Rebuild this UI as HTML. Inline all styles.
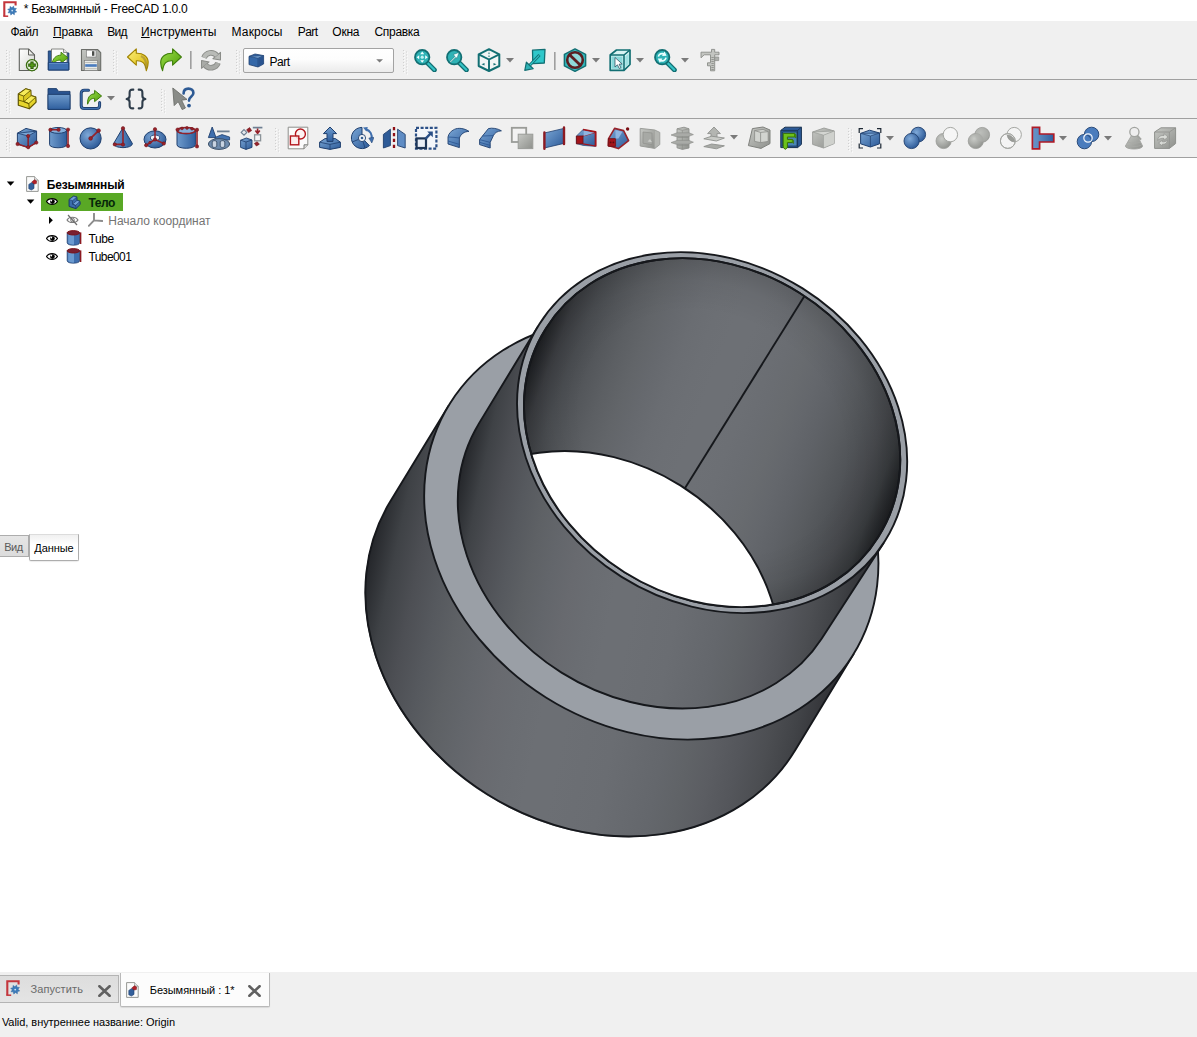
<!DOCTYPE html>
<html><head><meta charset="utf-8"><title>FreeCAD</title>
<style>
html,body{margin:0;padding:0;}
body{width:1197px;height:1037px;overflow:hidden;background:#fff;font-family:"Liberation Sans",sans-serif;font-size:12px;color:#000;position:relative;}
.abs{position:absolute;}
#title{left:0;top:0;width:1197px;height:21px;background:#fff;}
#title span{position:absolute;left:23px;top:2px;font-size:12px;white-space:nowrap;}
#menubar{left:0;top:21px;width:1197px;height:22px;background:#f0f0f0;}
#menubar span{position:absolute;top:4px;font-size:12px;white-space:nowrap;}
.tb{left:0;width:1197px;background:#f0f0f0;}
.sep{left:0;width:1197px;height:1px;background:#a0a0a0;}
#view{left:0;top:158px;width:1197px;height:814px;background:#fff;}
.tree{position:absolute;font-size:12px;white-space:nowrap;}
#bottom{left:0;top:972px;width:1197px;height:65px;background:#f0f0f0;}
#status{left:2px;top:1016px;font-size:11.5px;white-space:nowrap;}
</style></head><body>
<div id="title" class="abs"></div>
<div id="menubar" class="abs"></div>
<div class="abs tb" style="top:43px;height:36px"></div>
<div class="abs sep" style="top:79px"></div>
<div class="abs tb" style="top:80px;height:38px"></div>
<div class="abs sep" style="top:118px"></div>
<div class="abs tb" style="top:119px;height:38px"></div>
<div class="abs sep" style="top:157px"></div>
<div id="view" class="abs"></div>
<div id="bottom" class="abs"></div>
<!-- tree selection highlight -->
<div class="abs" style="left:41px;top:193px;width:82px;height:17.5px;background:#59a825"></div>
<!-- expand arrows -->
<svg class="abs" style="left:6px;top:180px" width="10" height="8" viewBox="0 0 10 8"><path d="M0.8,1.6 H8.4 L4.6,5.8 Z" fill="#000"/></svg>
<svg class="abs" style="left:26px;top:198px" width="10" height="8" viewBox="0 0 10 8"><path d="M0.8,1.6 H8.4 L4.6,5.8 Z" fill="#000"/></svg>
<svg class="abs" style="left:48px;top:216px" width="6" height="9" viewBox="0 0 6 9"><path d="M1,0.6 V8 L4.8,4.3 Z" fill="#000"/></svg>
<!-- document icon -->
<svg class="abs" style="left:26px;top:176px" width="13" height="16" viewBox="0 0 13 16"><path d="M0.6,0.6 H8.6 L12.2,4.2 V15.4 H0.6 Z" fill="#fbfbfb" stroke="#8a8c88" stroke-width="0.9"/><path d="M8.6,0.6 V4.2 H12.2" fill="#e4e4e4" stroke="#8a8c88" stroke-width="0.7"/><path d="M2.8,8.4 L5.6,6.6 L8,7.6 V12.4 L5.4,14 L2.8,12.8 Z" fill="#34609c" stroke="#1f3f6e" stroke-width="0.6"/><path d="M5.8,6 L8.4,3.8 L10.6,5 L10.4,7.6 L8,8 Z" fill="#b02028" stroke="#7a0d12" stroke-width="0.5"/></svg>
<!-- eye icons -->
<svg class="abs" style="left:46px;top:197px" width="12" height="9" viewBox="0 0 12 9"><path d="M0.5,4.6 C2.6,0.6 9.4,0.6 11.5,4.6 C9.4,8.4 2.6,8.4 0.5,4.6 Z" fill="#fff" stroke="#000" stroke-width="1.1"/><circle cx="6.4" cy="4.6" r="2.4" fill="#000"/><circle cx="5.3" cy="3.6" r="0.9" fill="#fff"/></svg>
<svg class="abs" style="left:46px;top:233.6px" width="12" height="9" viewBox="0 0 12 9"><path d="M0.5,4.6 C2.6,0.6 9.4,0.6 11.5,4.6 C9.4,8.4 2.6,8.4 0.5,4.6 Z" fill="#fff" stroke="#000" stroke-width="1.1"/><circle cx="6.4" cy="4.6" r="2.4" fill="#000"/><circle cx="5.3" cy="3.6" r="0.9" fill="#fff"/></svg>
<svg class="abs" style="left:46px;top:251.8px" width="12" height="9" viewBox="0 0 12 9"><path d="M0.5,4.6 C2.6,0.6 9.4,0.6 11.5,4.6 C9.4,8.4 2.6,8.4 0.5,4.6 Z" fill="#fff" stroke="#000" stroke-width="1.1"/><circle cx="6.4" cy="4.6" r="2.4" fill="#000"/><circle cx="5.3" cy="3.6" r="0.9" fill="#fff"/></svg>
<!-- hidden eye -->
<svg class="abs" style="left:66px;top:214px" width="13" height="12" viewBox="0 0 13 12"><path d="M1,6 C3,2.4 10,2.4 12,6 C10,9.4 3,9.4 1,6 Z" fill="none" stroke="#7c7c7c" stroke-width="1.1"/><circle cx="6.5" cy="6" r="1.8" fill="none" stroke="#7c7c7c" stroke-width="1"/><path d="M2,1 L11,11" stroke="#6e6e6e" stroke-width="1.2"/></svg>
<!-- body icon -->
<svg class="abs" style="left:67px;top:194.5px" width="15" height="15" viewBox="0 0 24 24"><path d="M3.3,7.1 L10.8,1.8 L15.8,3.3 L16.1,8.6 L20.8,10.1 L21.1,15.1 L14.3,21.8 L3.3,18.3 Z" fill="#3a6bab" stroke="#1a3a66" stroke-width="1.6" stroke-linejoin="round"/><path d="M3.3,7.1 L10.8,1.8 L15.8,3.3 L8.8,9.1 Z" fill="#6f9fd6" stroke="#1a3a66" stroke-width="1"/><path d="M8.8,14.6 L16.1,8.6 L20.8,10.1 L13.8,16.6 Z" fill="#6f9fd6" stroke="#1a3a66" stroke-width="1"/><path d="M8.8,9.1 V14.6 L13.8,16.6 L14.3,21.8" fill="none" stroke="#1a3a66" stroke-width="1"/></svg>
<!-- origin axis icon -->
<svg class="abs" style="left:88px;top:213px" width="15" height="14" viewBox="0 0 15 14"><path d="M6,0.6 V7.4 L0.8,12.8 M6,7.4 L14.4,8" fill="none" stroke="#8c8c8c" stroke-width="1.9" stroke-linecap="round"/></svg>
<!-- tube icons -->
<svg class="abs" style="left:66px;top:230px" width="16" height="16" viewBox="0 0 16 16"><path d="M1.2,2.8 V12.8 C1.2,16 13.6,16 13.6,12.8 V2.8 Z" fill="#3f6fae" stroke="#1f3f6e" stroke-width="0.8"/><path d="M2.2,4 V13 C4,14.6 7,14.8 8,14.6 V5 Z" fill="#6b9ad0"/><ellipse cx="7.4" cy="2.8" rx="6.2" ry="2.2" fill="#7a2030" stroke="#7a0d12" stroke-width="0.9"/><path d="M14.6,2.4 V14" stroke="#8c1a22" stroke-width="1.5"/></svg>
<svg class="abs" style="left:66px;top:248px" width="16" height="16" viewBox="0 0 16 16"><path d="M1.2,2.8 V12.8 C1.2,16 13.6,16 13.6,12.8 V2.8 Z" fill="#3f6fae" stroke="#1f3f6e" stroke-width="0.8"/><path d="M2.2,4 V13 C4,14.6 7,14.8 8,14.6 V5 Z" fill="#6b9ad0"/><ellipse cx="7.4" cy="2.8" rx="6.2" ry="2.2" fill="#7a2030" stroke="#7a0d12" stroke-width="0.9"/><path d="M14.6,2.4 V14" stroke="#8c1a22" stroke-width="1.5"/></svg>

<!-- title icon -->
<svg class="abs" style="left:3.2px;top:1px" width="14" height="16" viewBox="0 0 14 16"><path d="M1.3,15.2 V1.3 H12.6 V4.4" fill="none" stroke="#c4363c" stroke-width="2.1"/><path d="M0.3,15.2 H5.2" stroke="#c4363c" stroke-width="1.5"/><path d="M13.69,10.99 L11.43,11.45 L11.39,13.76 L9.47,12.49 L7.81,14.09 L7.35,11.83 L5.04,11.79 L6.31,9.87 L4.71,8.21 L6.97,7.75 L7.01,5.44 L8.93,6.71 L10.59,5.11 L11.05,7.37 L13.36,7.41 L12.09,9.33 Z" fill="#3d7bb8" stroke="#2c66a4" stroke-width="0.5"/><circle cx="9.2" cy="9.6" r="0.9" fill="#cfe3f5"/></svg>
<!-- workbench combo -->
<div class="abs" style="left:243px;top:48px;width:149px;height:23px;border:1px solid #a3a3a3;border-radius:2px;background:linear-gradient(#ffffff,#fdfdfd 45%,#ebebeb)"></div>
<svg class="abs" style="left:247.5px;top:52.5px" width="17" height="15" viewBox="0 0 17 15"><path d="M1,3.4 L7,1 L15.6,2.6 V11 L10,14 L1,11.6 Z" fill="#3568a8" stroke="#1f3f6e" stroke-width="0.8" stroke-linejoin="round"/><path d="M1,3.4 L10,5.2 L15.6,2.6 Z" fill="#7aa6d6" stroke="#1f3f6e" stroke-width="0.6"/><path d="M10,5.2 V14" stroke="#1f3f6e" stroke-width="0.6"/><path d="M10.4,5.6 L15.2,3.4 V10.8 L10.4,13.4 Z" fill="#2a5490"/></svg>
<svg class="abs" style="left:376px;top:58.6px" width="8" height="5" viewBox="0 0 8 5"><path d="M0.2,0.2 H7 L3.6,3.6 Z" fill="#7a7a7a"/></svg>
<!-- property tabs -->
<div class="abs" style="left:0;top:535px;width:28.5px;height:22px;border:1px solid #adadad;border-left:none;background:linear-gradient(#e6e6e6,#dcdcdc);box-sizing:border-box"></div>
<div class="abs" style="left:29px;top:534px;width:50px;height:26.5px;border:1px solid #adadad;border-top:1px solid #dcdcdc;border-radius:0 0 2px 2px;background:linear-gradient(#f0f0f0,#ffffff 40%);box-sizing:border-box;box-shadow:0 1px 1px rgba(0,0,0,0.08)"></div>
<!-- bottom document tabs -->
<div class="abs" style="left:0;top:975px;width:119px;height:28px;border:1px solid #b4b4b4;border-left:none;background:linear-gradient(#dddddd,#e4e4e4);box-sizing:border-box"></div>
<div class="abs" style="left:119.5px;top:973px;width:150px;height:33.6px;border:1px solid #b9b9b9;border-top:none;border-radius:0 0 2px 2px;background:#fcfcfc;box-sizing:border-box;box-shadow:0 1px 1px rgba(0,0,0,0.10)"></div>
<svg class="abs" style="left:6px;top:979.6px" width="14" height="16" viewBox="0 0 14 16"><path d="M1.3,15.2 V1.3 H12.6 V4.4" fill="none" stroke="#c4363c" stroke-width="2.1"/><path d="M0.3,15.2 H5.2" stroke="#c4363c" stroke-width="1.5"/><path d="M13.69,10.99 L11.43,11.45 L11.39,13.76 L9.47,12.49 L7.81,14.09 L7.35,11.83 L5.04,11.79 L6.31,9.87 L4.71,8.21 L6.97,7.75 L7.01,5.44 L8.93,6.71 L10.59,5.11 L11.05,7.37 L13.36,7.41 L12.09,9.33 Z" fill="#3d7bb8" stroke="#2c66a4" stroke-width="0.5"/><circle cx="9.2" cy="9.6" r="0.9" fill="#cfe3f5"/></svg>
<svg class="abs" style="left:97.5px;top:985px" width="13" height="12" viewBox="0 0 13 12"><path d="M1.4,1.2 L11.6,10.8 M11.6,1.2 L1.4,10.8" stroke="#606060" stroke-width="2.6" stroke-linecap="round"/></svg>
<svg class="abs" style="left:248px;top:985px" width="13" height="12" viewBox="0 0 13 12"><path d="M1.4,1.2 L11.6,10.8 M11.6,1.2 L1.4,10.8" stroke="#606060" stroke-width="2.6" stroke-linecap="round"/></svg>
<svg class="abs" style="left:126px;top:981.5px" width="13" height="16" viewBox="0 0 13 16"><path d="M0.6,0.6 H8.6 L12.2,4.2 V15.4 H0.6 Z" fill="#fbfbfb" stroke="#8a8c88" stroke-width="0.9"/><path d="M8.6,0.6 V4.2 H12.2" fill="#e4e4e4" stroke="#8a8c88" stroke-width="0.7"/><path d="M2.8,8.4 L5.6,6.6 L8,7.6 V12.4 L5.4,14 L2.8,12.8 Z" fill="#34609c" stroke="#1f3f6e" stroke-width="0.6"/><path d="M5.8,6 L8.4,3.8 L10.6,5 L10.4,7.6 L8,8 Z" fill="#b02028" stroke="#7a0d12" stroke-width="0.5"/></svg>


<svg class="abs" style="left:0;top:0" width="1197" height="1037" viewBox="0 0 1197 1037">
<defs>
<linearGradient id="gL" gradientUnits="userSpaceOnUse" x1="364.32" y1="577.69" x2="857.23" y2="682.46"><stop offset="0.000" stop-color="#24262a"/><stop offset="0.050" stop-color="#3f4246"/><stop offset="0.100" stop-color="#4d4f54"/><stop offset="0.150" stop-color="#56595e"/><stop offset="0.200" stop-color="#5e6165"/><stop offset="0.250" stop-color="#63666b"/><stop offset="0.300" stop-color="#686a6f"/><stop offset="0.350" stop-color="#6a6d72"/><stop offset="0.400" stop-color="#6c6f74"/><stop offset="0.450" stop-color="#6c6f74"/><stop offset="0.500" stop-color="#6b6e73"/><stop offset="0.550" stop-color="#6a6d72"/><stop offset="0.600" stop-color="#676a6f"/><stop offset="0.650" stop-color="#64676c"/><stop offset="0.700" stop-color="#606367"/><stop offset="0.750" stop-color="#5b5d62"/><stop offset="0.800" stop-color="#54565b"/><stop offset="0.850" stop-color="#4c4e52"/><stop offset="0.900" stop-color="#414347"/><stop offset="0.950" stop-color="#333438"/><stop offset="1.000" stop-color="#16171a"/></linearGradient>
<linearGradient id="gS" gradientUnits="userSpaceOnUse" x1="456.93" y1="488.19" x2="885.71" y2="579.33"><stop offset="0.000" stop-color="#24262a"/><stop offset="0.050" stop-color="#3f4246"/><stop offset="0.100" stop-color="#4d4f54"/><stop offset="0.150" stop-color="#56595e"/><stop offset="0.200" stop-color="#5e6165"/><stop offset="0.250" stop-color="#63666b"/><stop offset="0.300" stop-color="#686a6f"/><stop offset="0.350" stop-color="#6a6d72"/><stop offset="0.400" stop-color="#6c6f74"/><stop offset="0.450" stop-color="#6c6f74"/><stop offset="0.500" stop-color="#6b6e73"/><stop offset="0.550" stop-color="#6a6d72"/><stop offset="0.600" stop-color="#676a6f"/><stop offset="0.650" stop-color="#64676c"/><stop offset="0.700" stop-color="#606367"/><stop offset="0.750" stop-color="#5b5d62"/><stop offset="0.800" stop-color="#54565b"/><stop offset="0.850" stop-color="#4c4e52"/><stop offset="0.900" stop-color="#414347"/><stop offset="0.950" stop-color="#333438"/><stop offset="1.000" stop-color="#16171a"/></linearGradient>
<linearGradient id="gI" gradientUnits="userSpaceOnUse" x1="530.01" y1="362.75" x2="894.19" y2="502.55"><stop offset="0.000" stop-color="#1e2023"/><stop offset="0.050" stop-color="#3c3e42"/><stop offset="0.100" stop-color="#4a4d51"/><stop offset="0.150" stop-color="#54575b"/><stop offset="0.200" stop-color="#5c5f63"/><stop offset="0.250" stop-color="#626569"/><stop offset="0.300" stop-color="#66696e"/><stop offset="0.350" stop-color="#6a6d72"/><stop offset="0.400" stop-color="#6c6f74"/><stop offset="0.450" stop-color="#6d7075"/><stop offset="0.500" stop-color="#6d7075"/><stop offset="0.550" stop-color="#6c6f74"/><stop offset="0.600" stop-color="#6a6d72"/><stop offset="0.650" stop-color="#686b6f"/><stop offset="0.700" stop-color="#64676c"/><stop offset="0.750" stop-color="#5f6267"/><stop offset="0.800" stop-color="#595c60"/><stop offset="0.850" stop-color="#515458"/><stop offset="0.900" stop-color="#484a4e"/><stop offset="0.950" stop-color="#3a3d40"/><stop offset="1.000" stop-color="#1e2023"/></linearGradient>
<clipPath id="cpIn"><path d="M545.94,328.42 A196.15 163.74 32.1 1 0 878.26,536.88 A196.15 163.74 32.1 1 0 545.94,328.42 Z" /></clipPath>
<radialGradient id="gIr" gradientUnits="userSpaceOnUse" cx="0" cy="0" r="196.15" gradientTransform="translate(712.1 432.65) rotate(32.1) scale(1 0.8348)"><stop offset="0" stop-color="#000" stop-opacity="0"/><stop offset="0.70" stop-color="#000" stop-opacity="0"/><stop offset="0.88" stop-color="#000" stop-opacity="0.05"/><stop offset="1" stop-color="#000" stop-opacity="0.14"/></radialGradient>
</defs>
<path d="M450.09,403.28 A237.52 198.28 32.1 1 0 852.51,655.72 A237.52 198.28 32.1 1 0 450.09,403.28 Z" fill="url(#gL)"/>
<path d="M391.26,499.93 A237.62 198.37 32.1 1 0 793.84,752.47 A237.62 198.37 32.1 1 0 391.26,499.93 Z" fill="url(#gL)"/>
<path d="M448.93,405.17 L390.09,501.82 L795.16,750.33 L853.83,653.57 Z" fill="url(#gL)"/>
<path d="M448.93,405.17 L390.09,501.82 A237.62 198.37 32.1 0 0 487.14,794.24 A237.62 198.37 32.1 0 0 795.16,750.33 L853.83,653.57" fill="none" stroke="#16181c" stroke-width="1.9" stroke-linejoin="round"/>
<path d="M450.09,403.28 A237.52 198.28 32.1 1 0 852.51,655.72 A237.52 198.28 32.1 1 0 450.09,403.28 Z" fill="#9a9fa6" stroke="#16181c" stroke-width="1.9" stroke-linejoin="round"/>
<path d="M539.29,324.24 A204.00 170.30 32.1 1 0 884.91,541.06 A204.00 170.30 32.1 1 0 539.29,324.24 Z" fill="url(#gS)"/>
<path d="M479.87,421.96 A202.37 168.94 32.1 1 0 822.73,637.04 A202.37 168.94 32.1 1 0 479.87,421.96 Z" fill="url(#gS)"/>
<path d="M538.25,325.93 L478.84,423.63 L821.62,638.78 L883.80,542.81 Z" fill="url(#gS)"/>
<path d="M538.25,325.93 L478.84,423.63 A202.37 168.94 32.1 0 0 561.53,672.61 A202.37 168.94 32.1 0 0 821.62,638.78 L883.80,542.81" fill="none" stroke="#16181c" stroke-width="1.9" stroke-linejoin="round"/>
<path d="M539.29,324.24 A204.00 170.30 32.1 1 0 884.91,541.06 A204.00 170.30 32.1 1 0 539.29,324.24 Z" fill="#9a9fa6" stroke="#16181c" stroke-width="1.9" stroke-linejoin="round"/>
<path d="M545.94,328.42 A196.15 163.74 32.1 1 0 878.26,536.88 A196.15 163.74 32.1 1 0 545.94,328.42 Z" fill="url(#gI)" stroke="#16181c" stroke-width="1.9" stroke-linejoin="round"/>
<path d="M545.94,328.42 A196.15 163.74 32.1 1 0 878.26,536.88 A196.15 163.74 32.1 1 0 545.94,328.42 Z" fill="url(#gIr)"/>
<g clip-path="url(#cpIn)"><path d="M430.48,519.47 A193.51 161.55 32.1 1 0 758.34,725.13 A193.51 161.55 32.1 1 0 430.48,519.47 Z" fill="#ffffff" stroke="#16181c" stroke-width="1.9" stroke-linejoin="round"/>
<line x1="804.2" y1="296.4" x2="685.1" y2="488.1" stroke="#16181c" stroke-width="1.9"/>
</g>
<path d="M545.94,328.42 A196.15 163.74 32.1 1 0 878.26,536.88 A196.15 163.74 32.1 1 0 545.94,328.42 Z" fill="none" stroke="#16181c" stroke-width="1.9" stroke-linejoin="round"/>
</svg>
<svg width="0" height="0" style="position:absolute"><defs>
<linearGradient id="bl" x1="0" y1="0" x2="1" y2="1"><stop offset="0" stop-color="#7ba7d6"/><stop offset="1" stop-color="#2c5a98"/></linearGradient>
<linearGradient id="blv" x1="0" y1="0" x2="0" y2="1"><stop offset="0" stop-color="#6f9bcc"/><stop offset="1" stop-color="#2f5f9e"/></linearGradient>
<linearGradient id="blh" x1="0" y1="0" x2="1" y2="0"><stop offset="0" stop-color="#6f9bcc"/><stop offset="1" stop-color="#2f5f9e"/></linearGradient>
<linearGradient id="gr" x1="0" y1="0" x2="1" y2="1"><stop offset="0" stop-color="#c6c8c4"/><stop offset="1" stop-color="#8e908c"/></linearGradient>
<linearGradient id="grv" x1="0" y1="0" x2="0" y2="1"><stop offset="0" stop-color="#d0d2ce"/><stop offset="1" stop-color="#8c8e8a"/></linearGradient>
<linearGradient id="yl" x1="0" y1="0" x2="1" y2="1"><stop offset="0" stop-color="#fdf07a"/><stop offset="1" stop-color="#d8b400"/></linearGradient>
<linearGradient id="gn" x1="0" y1="0" x2="1" y2="1"><stop offset="0" stop-color="#9be04a"/><stop offset="1" stop-color="#4e9a06"/></linearGradient>
<linearGradient id="pap" x1="0" y1="0" x2="1" y2="1"><stop offset="0" stop-color="#ffffff"/><stop offset="1" stop-color="#d4d6d2"/></linearGradient>
<radialGradient id="sph" cx="0.38" cy="0.35" r="0.7"><stop offset="0" stop-color="#7fa9d8"/><stop offset="1" stop-color="#2a5795"/></radialGradient>
<radialGradient id="sphg" cx="0.38" cy="0.35" r="0.7"><stop offset="0" stop-color="#c9cbc7"/><stop offset="1" stop-color="#8f918d"/></radialGradient>
<linearGradient id="tl" x1="0" y1="0" x2="1" y2="1"><stop offset="0" stop-color="#43d3d5"/><stop offset="1" stop-color="#1fa3a6"/></linearGradient>
</defs></svg>
<svg class="abs" style="left:6px;top:50px" width="6" height="25" viewBox="0 0 6 25"><rect x="0" y="0" width="1" height="1" fill="#d0d0d0"/><rect x="1" y="1" width="1" height="1" fill="#fbfbfb"/><rect x="3" y="1.5" width="1" height="1" fill="#d0d0d0"/><rect x="4" y="2.5" width="1" height="1" fill="#ffffff"/><rect x="0" y="3" width="1" height="1" fill="#d0d0d0"/><rect x="1" y="4" width="1" height="1" fill="#fbfbfb"/><rect x="3" y="4.5" width="1" height="1" fill="#d0d0d0"/><rect x="4" y="5.5" width="1" height="1" fill="#ffffff"/><rect x="0" y="6" width="1" height="1" fill="#d0d0d0"/><rect x="1" y="7" width="1" height="1" fill="#fbfbfb"/><rect x="3" y="7.5" width="1" height="1" fill="#d0d0d0"/><rect x="4" y="8.5" width="1" height="1" fill="#ffffff"/><rect x="0" y="9" width="1" height="1" fill="#d0d0d0"/><rect x="1" y="10" width="1" height="1" fill="#fbfbfb"/><rect x="3" y="10.5" width="1" height="1" fill="#d0d0d0"/><rect x="4" y="11.5" width="1" height="1" fill="#ffffff"/><rect x="0" y="12" width="1" height="1" fill="#d0d0d0"/><rect x="1" y="13" width="1" height="1" fill="#fbfbfb"/><rect x="3" y="13.5" width="1" height="1" fill="#d0d0d0"/><rect x="4" y="14.5" width="1" height="1" fill="#ffffff"/><rect x="0" y="15" width="1" height="1" fill="#d0d0d0"/><rect x="1" y="16" width="1" height="1" fill="#fbfbfb"/><rect x="3" y="16.5" width="1" height="1" fill="#d0d0d0"/><rect x="4" y="17.5" width="1" height="1" fill="#ffffff"/><rect x="0" y="18" width="1" height="1" fill="#d0d0d0"/><rect x="1" y="19" width="1" height="1" fill="#fbfbfb"/><rect x="3" y="19.5" width="1" height="1" fill="#d0d0d0"/><rect x="4" y="20.5" width="1" height="1" fill="#ffffff"/><rect x="0" y="21" width="1" height="1" fill="#d0d0d0"/><rect x="1" y="22" width="1" height="1" fill="#fbfbfb"/><rect x="3" y="22.5" width="1" height="1" fill="#d0d0d0"/><rect x="4" y="23.5" width="1" height="1" fill="#ffffff"/></svg>
<svg class="abs" style="left:16px;top:48px" width="24" height="24" viewBox="0 0 24 24"><path d="M3.3,1 h9.2 l6,6 v15.5 h-15.2 z" fill="url(#pap)" stroke="#5f615d" stroke-width="1.1" stroke-linejoin="round"/>
<path d="M12.5,1 v6 h6 z" fill="#e9eae8" stroke="#5f615d" stroke-width="1" stroke-linejoin="round"/>
<circle cx="16" cy="17.2" r="5.6" fill="#e4f0d8" stroke="#3a6e10" stroke-width="1.3"/>
<path d="M16,13.4 v7.6 M12.2,17.2 h7.6" stroke="#2b5a0a" stroke-width="3.2"/>
<path d="M16,14.4 v5.6 M13.2,17.2 h5.6" stroke="#5aa51a" stroke-width="1.2"/></svg>
<svg class="abs" style="left:47px;top:48px" width="24" height="24" viewBox="0 0 24 24"><path d="M1.3,3 h6 l1.5,2 h13 v17 h-20.5 z" fill="#2f5c99" stroke="#1d3f70" stroke-width="1"/>
<path d="M4.5,1 h12 l3.5,3.5 v10 h-15.5 z" fill="#fbfbfb" stroke="#6a6c68" stroke-width="0.8"/>
<path d="M16.5,1 v3.5 h3.5" fill="#ddd" stroke="#6a6c68" stroke-width="0.7"/>
<path d="M5,16.5 c0.5,-6 4,-9.5 9,-9.3 v-3 l7,5.6 l-7,5.4 v-3 c-3,-0.4 -6,0.8 -9,4.3 z" fill="url(#gn)" stroke="#3c7a08" stroke-width="0.9" stroke-linejoin="round"/>
<path d="M1.3,14.5 h20.5 v7.5 h-20.5 z" fill="#3f70b2" stroke="#1d3f70" stroke-width="1"/>
<path d="M2,15.3 h19" stroke="#6f9bd2" stroke-width="0.8"/></svg>
<svg class="abs" style="left:79px;top:48px" width="24" height="24" viewBox="0 0 24 24"><path d="M2.5,1.5 h16 l3.2,3.2 v17.8 h-19.2 z" fill="url(#gr)" stroke="#6b6d69" stroke-width="1.1" stroke-linejoin="round"/>
<rect x="7.5" y="2.2" width="9.5" height="6.8" fill="#fafafa" stroke="#777" stroke-width="0.6"/>
<rect x="13" y="3.2" width="2.4" height="4.6" fill="#4a4c49"/>
<rect x="5.5" y="12.5" width="13" height="10" fill="#e9ebe8" stroke="#777" stroke-width="0.6"/>
<rect x="6.2" y="16.2" width="11.6" height="2.6" fill="#4a7cbf"/>
<path d="M6.2,14.5 h11.6 M6.2,20.7 h11.6" stroke="#b5b7b3" stroke-width="0.9"/></svg>
<svg class="abs" style="left:113px;top:50px" width="6" height="25" viewBox="0 0 6 25"><rect x="0" y="0" width="1" height="1" fill="#d0d0d0"/><rect x="1" y="1" width="1" height="1" fill="#fbfbfb"/><rect x="3" y="1.5" width="1" height="1" fill="#d0d0d0"/><rect x="4" y="2.5" width="1" height="1" fill="#ffffff"/><rect x="0" y="3" width="1" height="1" fill="#d0d0d0"/><rect x="1" y="4" width="1" height="1" fill="#fbfbfb"/><rect x="3" y="4.5" width="1" height="1" fill="#d0d0d0"/><rect x="4" y="5.5" width="1" height="1" fill="#ffffff"/><rect x="0" y="6" width="1" height="1" fill="#d0d0d0"/><rect x="1" y="7" width="1" height="1" fill="#fbfbfb"/><rect x="3" y="7.5" width="1" height="1" fill="#d0d0d0"/><rect x="4" y="8.5" width="1" height="1" fill="#ffffff"/><rect x="0" y="9" width="1" height="1" fill="#d0d0d0"/><rect x="1" y="10" width="1" height="1" fill="#fbfbfb"/><rect x="3" y="10.5" width="1" height="1" fill="#d0d0d0"/><rect x="4" y="11.5" width="1" height="1" fill="#ffffff"/><rect x="0" y="12" width="1" height="1" fill="#d0d0d0"/><rect x="1" y="13" width="1" height="1" fill="#fbfbfb"/><rect x="3" y="13.5" width="1" height="1" fill="#d0d0d0"/><rect x="4" y="14.5" width="1" height="1" fill="#ffffff"/><rect x="0" y="15" width="1" height="1" fill="#d0d0d0"/><rect x="1" y="16" width="1" height="1" fill="#fbfbfb"/><rect x="3" y="16.5" width="1" height="1" fill="#d0d0d0"/><rect x="4" y="17.5" width="1" height="1" fill="#ffffff"/><rect x="0" y="18" width="1" height="1" fill="#d0d0d0"/><rect x="1" y="19" width="1" height="1" fill="#fbfbfb"/><rect x="3" y="19.5" width="1" height="1" fill="#d0d0d0"/><rect x="4" y="20.5" width="1" height="1" fill="#ffffff"/><rect x="0" y="21" width="1" height="1" fill="#d0d0d0"/><rect x="1" y="22" width="1" height="1" fill="#fbfbfb"/><rect x="3" y="22.5" width="1" height="1" fill="#d0d0d0"/><rect x="4" y="23.5" width="1" height="1" fill="#ffffff"/></svg>
<svg class="abs" style="left:126px;top:48px" width="24" height="24" viewBox="0 0 24 24"><path d="M1.5,9 L10.3,0.9 V5.3 C17,5 22,8.5 22.2,14 C22.3,17 21.5,20 20.3,22.8 C19.8,19 18.5,16 17.2,14.7 C15.5,13 13,12.6 10.3,12.8 V17.2 Z" fill="url(#yl)" stroke="#a08300" stroke-width="1.1" stroke-linejoin="round"/>
<path d="M15,8 C19.6,10 20.6,15 20,20.4" fill="none" stroke="#8d7a3c" stroke-width="2.4" opacity="0.5"/></svg>
<svg class="abs" style="left:158px;top:48px" width="24" height="24" viewBox="0 0 24 24"><path d="M23.4,9 L14.6,0.9 V5.3 C7.9,5 2.9,8.5 2.7,14 C2.6,17 3.4,20 4.6,22.8 C5.1,19 6.4,16 7.7,14.7 C9.4,13 11.9,12.6 14.6,12.8 V17.2 Z" fill="url(#gn)" stroke="#3f7f0a" stroke-width="1.1" stroke-linejoin="round"/></svg>
<svg class="abs" style="left:189.8px;top:50.8px" width="3" height="18.200000000000003" viewBox="0 0 3 18.200000000000003"><rect x="0.2" y="0" width="1.3" height="18.200000000000003" fill="#8c8c8c"/></svg>
<svg class="abs" style="left:199px;top:48px" width="24" height="24" viewBox="0 0 24 24"><g transform="translate(12 12.3) scale(1.13) translate(-12 -12.3)"><path d="M5.8,10.04 A6.6,6.6 0 0 1 17.06,8.06" fill="none" stroke="#8a8c88" stroke-width="5"/>
<path d="M20.43,5.23 L13.69,10.89 L20.4,12.04 Z" fill="#b9bbb7" stroke="#8a8c88" stroke-width="0.9" stroke-linejoin="round"/>
<path d="M5.8,10.04 A6.6,6.6 0 0 1 17.06,8.06" fill="none" stroke="#b9bbb7" stroke-width="3.4"/>
<path d="M18.2,14.56 A6.6,6.6 0 0 1 6.94,16.54" fill="none" stroke="#8a8c88" stroke-width="5"/>
<path d="M3.57,19.37 L10.31,13.71 L3.6,12.56 Z" fill="#a9aba7" stroke="#8a8c88" stroke-width="0.9" stroke-linejoin="round"/>
<path d="M18.2,14.56 A6.6,6.6 0 0 1 6.94,16.54" fill="none" stroke="#a9aba7" stroke-width="3.4"/></g></svg>
<svg class="abs" style="left:236px;top:50px" width="6" height="25" viewBox="0 0 6 25"><rect x="0" y="0" width="1" height="1" fill="#d0d0d0"/><rect x="1" y="1" width="1" height="1" fill="#fbfbfb"/><rect x="3" y="1.5" width="1" height="1" fill="#d0d0d0"/><rect x="4" y="2.5" width="1" height="1" fill="#ffffff"/><rect x="0" y="3" width="1" height="1" fill="#d0d0d0"/><rect x="1" y="4" width="1" height="1" fill="#fbfbfb"/><rect x="3" y="4.5" width="1" height="1" fill="#d0d0d0"/><rect x="4" y="5.5" width="1" height="1" fill="#ffffff"/><rect x="0" y="6" width="1" height="1" fill="#d0d0d0"/><rect x="1" y="7" width="1" height="1" fill="#fbfbfb"/><rect x="3" y="7.5" width="1" height="1" fill="#d0d0d0"/><rect x="4" y="8.5" width="1" height="1" fill="#ffffff"/><rect x="0" y="9" width="1" height="1" fill="#d0d0d0"/><rect x="1" y="10" width="1" height="1" fill="#fbfbfb"/><rect x="3" y="10.5" width="1" height="1" fill="#d0d0d0"/><rect x="4" y="11.5" width="1" height="1" fill="#ffffff"/><rect x="0" y="12" width="1" height="1" fill="#d0d0d0"/><rect x="1" y="13" width="1" height="1" fill="#fbfbfb"/><rect x="3" y="13.5" width="1" height="1" fill="#d0d0d0"/><rect x="4" y="14.5" width="1" height="1" fill="#ffffff"/><rect x="0" y="15" width="1" height="1" fill="#d0d0d0"/><rect x="1" y="16" width="1" height="1" fill="#fbfbfb"/><rect x="3" y="16.5" width="1" height="1" fill="#d0d0d0"/><rect x="4" y="17.5" width="1" height="1" fill="#ffffff"/><rect x="0" y="18" width="1" height="1" fill="#d0d0d0"/><rect x="1" y="19" width="1" height="1" fill="#fbfbfb"/><rect x="3" y="19.5" width="1" height="1" fill="#d0d0d0"/><rect x="4" y="20.5" width="1" height="1" fill="#ffffff"/><rect x="0" y="21" width="1" height="1" fill="#d0d0d0"/><rect x="1" y="22" width="1" height="1" fill="#fbfbfb"/><rect x="3" y="22.5" width="1" height="1" fill="#d0d0d0"/><rect x="4" y="23.5" width="1" height="1" fill="#ffffff"/></svg>
<svg class="abs" style="left:403px;top:50px" width="6" height="25" viewBox="0 0 6 25"><rect x="0" y="0" width="1" height="1" fill="#d0d0d0"/><rect x="1" y="1" width="1" height="1" fill="#fbfbfb"/><rect x="3" y="1.5" width="1" height="1" fill="#d0d0d0"/><rect x="4" y="2.5" width="1" height="1" fill="#ffffff"/><rect x="0" y="3" width="1" height="1" fill="#d0d0d0"/><rect x="1" y="4" width="1" height="1" fill="#fbfbfb"/><rect x="3" y="4.5" width="1" height="1" fill="#d0d0d0"/><rect x="4" y="5.5" width="1" height="1" fill="#ffffff"/><rect x="0" y="6" width="1" height="1" fill="#d0d0d0"/><rect x="1" y="7" width="1" height="1" fill="#fbfbfb"/><rect x="3" y="7.5" width="1" height="1" fill="#d0d0d0"/><rect x="4" y="8.5" width="1" height="1" fill="#ffffff"/><rect x="0" y="9" width="1" height="1" fill="#d0d0d0"/><rect x="1" y="10" width="1" height="1" fill="#fbfbfb"/><rect x="3" y="10.5" width="1" height="1" fill="#d0d0d0"/><rect x="4" y="11.5" width="1" height="1" fill="#ffffff"/><rect x="0" y="12" width="1" height="1" fill="#d0d0d0"/><rect x="1" y="13" width="1" height="1" fill="#fbfbfb"/><rect x="3" y="13.5" width="1" height="1" fill="#d0d0d0"/><rect x="4" y="14.5" width="1" height="1" fill="#ffffff"/><rect x="0" y="15" width="1" height="1" fill="#d0d0d0"/><rect x="1" y="16" width="1" height="1" fill="#fbfbfb"/><rect x="3" y="16.5" width="1" height="1" fill="#d0d0d0"/><rect x="4" y="17.5" width="1" height="1" fill="#ffffff"/><rect x="0" y="18" width="1" height="1" fill="#d0d0d0"/><rect x="1" y="19" width="1" height="1" fill="#fbfbfb"/><rect x="3" y="19.5" width="1" height="1" fill="#d0d0d0"/><rect x="4" y="20.5" width="1" height="1" fill="#ffffff"/><rect x="0" y="21" width="1" height="1" fill="#d0d0d0"/><rect x="1" y="22" width="1" height="1" fill="#fbfbfb"/><rect x="3" y="22.5" width="1" height="1" fill="#d0d0d0"/><rect x="4" y="23.5" width="1" height="1" fill="#ffffff"/></svg>
<svg class="abs" style="left:413px;top:48px" width="24" height="24" viewBox="0 0 24 24"><path d="M14,14.5 L21.5,22" stroke="#126f73" stroke-width="4.6" stroke-linecap="round"/>
<path d="M14.5,15 L21.3,21.8" stroke="#36c3c6" stroke-width="2.2" stroke-linecap="round"/>
<circle cx="9.2" cy="9.2" r="7.2" fill="#2fb3b6" stroke="#126f73" stroke-width="1.8"/>
<path d="M9.2,3.6 l2,2.6 h-4 z M9.2,14.8 l2,-2.6 h-4 z M3.6,9.2 l2.6,-2 v4 z M14.8,9.2 l-2.6,-2 v4 z" fill="#f2ffff"/>
<circle cx="9.2" cy="9.2" r="1.6" fill="#bff3f3"/></svg>
<svg class="abs" style="left:445px;top:48px" width="24" height="24" viewBox="0 0 24 24"><path d="M14,14.5 L21.5,22" stroke="#126f73" stroke-width="4.6" stroke-linecap="round"/>
<path d="M14.5,15 L21.3,21.8" stroke="#36c3c6" stroke-width="2.2" stroke-linecap="round"/>
<circle cx="9.2" cy="9.2" r="7.2" fill="#2fb3b6" stroke="#126f73" stroke-width="1.8"/>
<path d="M4.8,13.8 L10,8.4 L8.2,6.6 L14,4.4 L12,10.4 L10.9,9.3 L5.7,14.5 Z" fill="#f2ffff" stroke="#126f73" stroke-width="0.5"/></svg>
<svg class="abs" style="left:477.4px;top:48px" width="24" height="24" viewBox="0 0 24 24"><path d="M12,1.2 L22.3,6.3 V18 L12,23 L1.7,18 V6.3 Z" fill="#f1f5f5" stroke="#126f73" stroke-width="2" stroke-linejoin="round"/>
<path d="M1.7,6.3 L12,11.5 L22.3,6.3 M12,11.5 V23" fill="none" stroke="#126f73" stroke-width="1.9"/>
<path d="M12,1.5 V9" stroke="#126f73" stroke-width="1" stroke-dasharray="1.6 1.4"/>
<path d="M4.5,16.2 l3,-1.2 v2.6 z M19.5,16.2 l-3,-1.2 v2.6 z" fill="#126f73"/></svg>
<svg class="abs" style="left:505.5px;top:57.6px" width="8" height="5" viewBox="0 0 8 5"><path d="M0,0 h8 l-4,4.5 z" fill="#7a7a7a"/></svg>
<svg class="abs" style="left:522.5px;top:48px" width="24" height="24" viewBox="0 0 24 24"><path d="M9.5,2.2 L22,1.4 L21.3,15 L9.8,15.6 Z" fill="#2fc7ca" stroke="#126f73" stroke-width="1.3" stroke-linejoin="round"/>
<path d="M16.5,7 L6.5,17.5" stroke="#126f73" stroke-width="3"/>
<path d="M1.8,22.3 L3.4,14.2 L10.2,20.7 Z" fill="#2fb3b6" stroke="#126f73" stroke-width="1.2" stroke-linejoin="round"/>
<path d="M16.2,7.4 L7,17" stroke="#2fc7ca" stroke-width="1.1"/></svg>
<svg class="abs" style="left:553.8px;top:51.5px" width="3" height="18.299999999999997" viewBox="0 0 3 18.299999999999997"><rect x="0.2" y="0" width="1.3" height="18.299999999999997" fill="#8c8c8c"/></svg>
<svg class="abs" style="left:563px;top:48px" width="24" height="24" viewBox="0 0 24 24"><path d="M12,0.9 L22.6,6.4 V17.8 L12,23.3 L1.4,17.8 V6.4 Z" fill="#35bcbf" stroke="#126f73" stroke-width="1.5" stroke-linejoin="round"/>
<circle cx="12" cy="12" r="7.8" fill="#8fd9da" stroke="#5b1f22" stroke-width="2.6"/>
<path d="M6.3,6.6 L17.7,17.4" stroke="#5b1f22" stroke-width="2.8"/></svg>
<svg class="abs" style="left:591.6px;top:57.6px" width="8" height="5" viewBox="0 0 8 5"><path d="M0,0 h8 l-4,4.5 z" fill="#7a7a7a"/></svg>
<svg class="abs" style="left:607.85px;top:48px" width="24" height="24" viewBox="0 0 24 24"><path d="M2.2,7 L8.5,2 H22 V16.5 L16,22.3 H2.2 Z" fill="#d9f3f3" stroke="#126f73" stroke-width="1.7" stroke-linejoin="round"/>
<path d="M2.2,7 H16 L22,2 M16,7 V22.3" fill="none" stroke="#126f73" stroke-width="1.6"/>
<path d="M3.5,8.5 h11 v12.3 h-11 z" fill="#6fcfd1" opacity="0.75"/>
<path d="M7,9.5 L7,19 L9.4,16.8 L11.3,20.5 L12.9,19.7 L11.1,16.2 L14.2,16 Z" fill="#ffffff" stroke="#245" stroke-width="0.7"/>
<path d="M17.3,8.5 L20.7,5.6 V15.8 L17.3,19.2 Z" fill="#8edcdd" opacity="0.8"/></svg>
<svg class="abs" style="left:636.4px;top:57.6px" width="8" height="5" viewBox="0 0 8 5"><path d="M0,0 h8 l-4,4.5 z" fill="#7a7a7a"/></svg>
<svg class="abs" style="left:652.7px;top:48px" width="24" height="24" viewBox="0 0 24 24"><path d="M14,14.5 L21.5,22" stroke="#126f73" stroke-width="4.6" stroke-linecap="round"/>
<path d="M14.5,15 L21.3,21.8" stroke="#36c3c6" stroke-width="2.2" stroke-linecap="round"/>
<circle cx="9.2" cy="9.2" r="7.2" fill="#2fb3b6" stroke="#126f73" stroke-width="1.8"/>
<path d="M4.6,8.6 C5,5.6 8,4 10.6,5 L11.6,3.6 L13.6,7.8 L9,7.9 L9.8,6.6 C8,6.2 6.6,7 6.2,8.8 Z M13.8,9.8 C13.4,12.8 10.4,14.4 7.8,13.4 L6.8,14.8 L4.8,10.6 L9.4,10.5 L8.6,11.8 C10.4,12.2 11.8,11.4 12.2,9.6 Z" fill="#eaffff"/></svg>
<svg class="abs" style="left:680.9px;top:57.6px" width="8" height="5" viewBox="0 0 8 5"><path d="M0,0 h8 l-4,4.5 z" fill="#7a7a7a"/></svg>
<svg class="abs" style="left:697.9px;top:48px" width="24" height="24" viewBox="0 0 24 24"><path d="M3,4.2 h10.5 v-2.8 h3.2 v2.8 h4.3 v2.6 h-4.3 v16 h-4.2 v-5 h-3 v-3 h3 v-8 h-6.3 l-3.2,3 z" fill="#c3c5c1" stroke="#8a8c88" stroke-width="0.9" stroke-linejoin="round"/>
<path d="M16.7,9 h4 v3.6 h-4 z" fill="#aeb0ac" stroke="#8a8c88" stroke-width="0.7"/>
<path d="M13.4,9.5 h2.4 M13.4,11.5 h2.4 M13.4,13.5 h2.4 M13.4,15.5 h2.4 M13.4,17.5 h2.4 M13.4,19.5 h2.4 M13.4,21.5 h2.4" stroke="#7f817d" stroke-width="0.7"/></svg>
<svg class="abs" style="left:6px;top:89px" width="6" height="25" viewBox="0 0 6 25"><rect x="0" y="0" width="1" height="1" fill="#d0d0d0"/><rect x="1" y="1" width="1" height="1" fill="#fbfbfb"/><rect x="3" y="1.5" width="1" height="1" fill="#d0d0d0"/><rect x="4" y="2.5" width="1" height="1" fill="#ffffff"/><rect x="0" y="3" width="1" height="1" fill="#d0d0d0"/><rect x="1" y="4" width="1" height="1" fill="#fbfbfb"/><rect x="3" y="4.5" width="1" height="1" fill="#d0d0d0"/><rect x="4" y="5.5" width="1" height="1" fill="#ffffff"/><rect x="0" y="6" width="1" height="1" fill="#d0d0d0"/><rect x="1" y="7" width="1" height="1" fill="#fbfbfb"/><rect x="3" y="7.5" width="1" height="1" fill="#d0d0d0"/><rect x="4" y="8.5" width="1" height="1" fill="#ffffff"/><rect x="0" y="9" width="1" height="1" fill="#d0d0d0"/><rect x="1" y="10" width="1" height="1" fill="#fbfbfb"/><rect x="3" y="10.5" width="1" height="1" fill="#d0d0d0"/><rect x="4" y="11.5" width="1" height="1" fill="#ffffff"/><rect x="0" y="12" width="1" height="1" fill="#d0d0d0"/><rect x="1" y="13" width="1" height="1" fill="#fbfbfb"/><rect x="3" y="13.5" width="1" height="1" fill="#d0d0d0"/><rect x="4" y="14.5" width="1" height="1" fill="#ffffff"/><rect x="0" y="15" width="1" height="1" fill="#d0d0d0"/><rect x="1" y="16" width="1" height="1" fill="#fbfbfb"/><rect x="3" y="16.5" width="1" height="1" fill="#d0d0d0"/><rect x="4" y="17.5" width="1" height="1" fill="#ffffff"/><rect x="0" y="18" width="1" height="1" fill="#d0d0d0"/><rect x="1" y="19" width="1" height="1" fill="#fbfbfb"/><rect x="3" y="19.5" width="1" height="1" fill="#d0d0d0"/><rect x="4" y="20.5" width="1" height="1" fill="#ffffff"/><rect x="0" y="21" width="1" height="1" fill="#d0d0d0"/><rect x="1" y="22" width="1" height="1" fill="#fbfbfb"/><rect x="3" y="22.5" width="1" height="1" fill="#d0d0d0"/><rect x="4" y="23.5" width="1" height="1" fill="#ffffff"/></svg>
<svg class="abs" style="left:14.75px;top:87px" width="24" height="24" viewBox="0 0 24 24"><path d="M3.3,7.1 L10.8,1.8 L15.8,3.3 L16.1,8.6 L20.8,10.1 L21.1,15.1 L14.3,21.8 L3.3,18.3 Z" fill="#e6d52c" stroke="#5f5400" stroke-width="1.2" stroke-linejoin="round"/>
<path d="M3.3,7.1 L10.8,1.8 L15.8,3.3 L8.8,9.1 Z" fill="#f6ec5a" stroke="#5f5400" stroke-width="0.9" stroke-linejoin="round"/>
<path d="M8.8,14.6 L16.1,8.6 L20.8,10.1 L13.8,16.6 Z" fill="#f6ec5a" stroke="#5f5400" stroke-width="0.9" stroke-linejoin="round"/>
<path d="M8.8,9.1 V14.6 L13.8,16.6 L14.3,21.8 M3.3,13 L8.8,14.6" fill="none" stroke="#5f5400" stroke-width="0.9"/>
<path d="M9.4,9.6 L15.4,4.6 V8.6 L9.4,13.6 Z" fill="#d9c722"/></svg>
<svg class="abs" style="left:47.1px;top:87px" width="24" height="24" viewBox="0 0 24 24"><path d="M1,1.6 h8.5 l2,2.8 h11.5 v18 h-22 z" fill="#2a5490" stroke="#1c3c6b" stroke-width="0.9"/>
<path d="M1,7.4 h22 v15 h-22 z" fill="url(#blv)" stroke="#1c3c6b" stroke-width="0.9"/></svg>
<svg class="abs" style="left:79.25px;top:87px" width="24" height="24" viewBox="0 0 24 24"><path d="M9.5,3.2 H5.2 C3.2,3.2 2.2,4.2 2.2,6.2 V18.6 C2.2,20.6 3.2,21.6 5.2,21.6 H17.6 C19.6,21.6 20.6,20.6 20.6,18.6 V15.5" fill="none" stroke="#1f3f6e" stroke-width="3" stroke-linecap="round"/>
<path d="M9.5,3.2 H5.2 C3.2,3.2 2.2,4.2 2.2,6.2 V18.6 C2.2,20.6 3.2,21.6 5.2,21.6 H17.6 C19.6,21.6 20.6,20.6 20.6,18.6 V15.5" fill="none" stroke="#3f6fae" stroke-width="1.2" stroke-linecap="round"/>
<path d="M8.6,17.2 C8.2,10.5 11,7 15.6,6.8 V3.4 L22.6,9 L15.6,14.6 V11.4 C12.4,11.2 10.2,13 8.6,17.2 Z" fill="url(#gn)" stroke="#3c7a08" stroke-width="1" stroke-linejoin="round"/></svg>
<svg class="abs" style="left:107.3px;top:96.4px" width="8" height="5" viewBox="0 0 8 5"><path d="M0,0 h8 l-4,4.5 z" fill="#7a7a7a"/></svg>
<svg class="abs" style="left:124px;top:87px" width="24" height="24" viewBox="0 0 24 24"><path d="M9.3,2.6 C6,2.4 5.6,3.8 5.6,6 V9 C5.6,10.8 4.8,11.6 2.6,12 C4.8,12.4 5.6,13.2 5.6,15 V18 C5.6,20.2 6,21.6 9.3,21.4 M14.7,2.6 C18,2.4 18.4,3.8 18.4,6 V9 C18.4,10.8 19.2,11.6 21.4,12 C19.2,12.4 18.4,13.2 18.4,15 V18 C18.4,20.2 18,21.6 14.7,21.4" fill="none" stroke="#2e3c4a" stroke-width="2.1" stroke-linecap="round" stroke-linejoin="round"/></svg>
<svg class="abs" style="left:161px;top:89px" width="6" height="25" viewBox="0 0 6 25"><rect x="0" y="0" width="1" height="1" fill="#d0d0d0"/><rect x="1" y="1" width="1" height="1" fill="#fbfbfb"/><rect x="3" y="1.5" width="1" height="1" fill="#d0d0d0"/><rect x="4" y="2.5" width="1" height="1" fill="#ffffff"/><rect x="0" y="3" width="1" height="1" fill="#d0d0d0"/><rect x="1" y="4" width="1" height="1" fill="#fbfbfb"/><rect x="3" y="4.5" width="1" height="1" fill="#d0d0d0"/><rect x="4" y="5.5" width="1" height="1" fill="#ffffff"/><rect x="0" y="6" width="1" height="1" fill="#d0d0d0"/><rect x="1" y="7" width="1" height="1" fill="#fbfbfb"/><rect x="3" y="7.5" width="1" height="1" fill="#d0d0d0"/><rect x="4" y="8.5" width="1" height="1" fill="#ffffff"/><rect x="0" y="9" width="1" height="1" fill="#d0d0d0"/><rect x="1" y="10" width="1" height="1" fill="#fbfbfb"/><rect x="3" y="10.5" width="1" height="1" fill="#d0d0d0"/><rect x="4" y="11.5" width="1" height="1" fill="#ffffff"/><rect x="0" y="12" width="1" height="1" fill="#d0d0d0"/><rect x="1" y="13" width="1" height="1" fill="#fbfbfb"/><rect x="3" y="13.5" width="1" height="1" fill="#d0d0d0"/><rect x="4" y="14.5" width="1" height="1" fill="#ffffff"/><rect x="0" y="15" width="1" height="1" fill="#d0d0d0"/><rect x="1" y="16" width="1" height="1" fill="#fbfbfb"/><rect x="3" y="16.5" width="1" height="1" fill="#d0d0d0"/><rect x="4" y="17.5" width="1" height="1" fill="#ffffff"/><rect x="0" y="18" width="1" height="1" fill="#d0d0d0"/><rect x="1" y="19" width="1" height="1" fill="#fbfbfb"/><rect x="3" y="19.5" width="1" height="1" fill="#d0d0d0"/><rect x="4" y="20.5" width="1" height="1" fill="#ffffff"/><rect x="0" y="21" width="1" height="1" fill="#d0d0d0"/><rect x="1" y="22" width="1" height="1" fill="#fbfbfb"/><rect x="3" y="22.5" width="1" height="1" fill="#d0d0d0"/><rect x="4" y="23.5" width="1" height="1" fill="#ffffff"/></svg>
<svg class="abs" style="left:171.35px;top:87px" width="24" height="24" viewBox="0 0 24 24"><path d="M1.8,1 L3.2,18.6 L7.2,14.6 L11.2,22.6 L14.4,21 L10.6,13.2 L16,12.4 Z" fill="#8a8c88" stroke="#6d6f6b" stroke-width="0.9" stroke-linejoin="round"/>
<path d="M12.6,6.4 C12.6,2.8 15,1.6 17.4,1.6 C20.4,1.6 22.4,3.4 22.4,6 C22.4,9.6 18,9.4 18,13.6" fill="none" stroke="#2d5a94" stroke-width="2.6" stroke-linecap="round"/>
<circle cx="18" cy="18.6" r="1.9" fill="#2d5a94"/></svg>
<svg class="abs" style="left:6px;top:128px" width="6" height="25" viewBox="0 0 6 25"><rect x="0" y="0" width="1" height="1" fill="#d0d0d0"/><rect x="1" y="1" width="1" height="1" fill="#fbfbfb"/><rect x="3" y="1.5" width="1" height="1" fill="#d0d0d0"/><rect x="4" y="2.5" width="1" height="1" fill="#ffffff"/><rect x="0" y="3" width="1" height="1" fill="#d0d0d0"/><rect x="1" y="4" width="1" height="1" fill="#fbfbfb"/><rect x="3" y="4.5" width="1" height="1" fill="#d0d0d0"/><rect x="4" y="5.5" width="1" height="1" fill="#ffffff"/><rect x="0" y="6" width="1" height="1" fill="#d0d0d0"/><rect x="1" y="7" width="1" height="1" fill="#fbfbfb"/><rect x="3" y="7.5" width="1" height="1" fill="#d0d0d0"/><rect x="4" y="8.5" width="1" height="1" fill="#ffffff"/><rect x="0" y="9" width="1" height="1" fill="#d0d0d0"/><rect x="1" y="10" width="1" height="1" fill="#fbfbfb"/><rect x="3" y="10.5" width="1" height="1" fill="#d0d0d0"/><rect x="4" y="11.5" width="1" height="1" fill="#ffffff"/><rect x="0" y="12" width="1" height="1" fill="#d0d0d0"/><rect x="1" y="13" width="1" height="1" fill="#fbfbfb"/><rect x="3" y="13.5" width="1" height="1" fill="#d0d0d0"/><rect x="4" y="14.5" width="1" height="1" fill="#ffffff"/><rect x="0" y="15" width="1" height="1" fill="#d0d0d0"/><rect x="1" y="16" width="1" height="1" fill="#fbfbfb"/><rect x="3" y="16.5" width="1" height="1" fill="#d0d0d0"/><rect x="4" y="17.5" width="1" height="1" fill="#ffffff"/><rect x="0" y="18" width="1" height="1" fill="#d0d0d0"/><rect x="1" y="19" width="1" height="1" fill="#fbfbfb"/><rect x="3" y="19.5" width="1" height="1" fill="#d0d0d0"/><rect x="4" y="20.5" width="1" height="1" fill="#ffffff"/><rect x="0" y="21" width="1" height="1" fill="#d0d0d0"/><rect x="1" y="22" width="1" height="1" fill="#fbfbfb"/><rect x="3" y="22.5" width="1" height="1" fill="#d0d0d0"/><rect x="4" y="23.5" width="1" height="1" fill="#ffffff"/></svg>
<svg class="abs" style="left:15px;top:126px" width="24" height="24" viewBox="0 0 24 24"><path d="M2.4,7.2 L11,2.4 L21.6,5.2 V16.6 L13.2,21.6 L2.4,18 Z" fill="url(#bl)" stroke="#1f3f6e" stroke-width="1" stroke-linejoin="round"/>
<path d="M2.4,7.2 L13.2,10 L21.6,5.2 Z" fill="#7aa6d6" stroke="#1f3f6e" stroke-width="0.8" stroke-linejoin="round"/>
<path d="M13.2,10 V21.6" stroke="#1f3f6e" stroke-width="0.8"/>
<path d="M2.6,18 L13.2,21.4 L21.4,16.6 M13.2,10 V21.4" fill="none" stroke="#96222a" stroke-width="1.5"/>
<circle cx="2.6" cy="18" r="1.7" fill="#96222a" stroke="#6e1218" stroke-width="0.5"/><circle cx="13.2" cy="21.2" r="1.7" fill="#96222a" stroke="#6e1218" stroke-width="0.5"/><circle cx="21.3" cy="16.6" r="1.7" fill="#96222a" stroke="#6e1218" stroke-width="0.5"/><circle cx="13.2" cy="10" r="1.7" fill="#96222a" stroke="#6e1218" stroke-width="0.5"/></svg>
<svg class="abs" style="left:46.5px;top:126px" width="24" height="24" viewBox="0 0 24 24"><path d="M2.6,4.4 V18.6 C2.6,22.8 19.6,22.8 19.6,18.6 V4.4 Z" fill="url(#blh)" stroke="#1f3f6e" stroke-width="1"/>
<ellipse cx="11.1" cy="4.4" rx="8.5" ry="2.9" fill="#86b0dc" stroke="#1f3f6e" stroke-width="1"/>
<path d="M3.4,3.8 H11.5 M21,3.6 V20" stroke="#96222a" stroke-width="1.6"/>
<circle cx="3.4" cy="3.8" r="1.7" fill="#96222a" stroke="#6e1218" stroke-width="0.5"/><circle cx="11.6" cy="3.8" r="1.7" fill="#96222a" stroke="#6e1218" stroke-width="0.5"/><circle cx="21" cy="3.6" r="1.7" fill="#96222a" stroke="#6e1218" stroke-width="0.5"/><circle cx="21" cy="20" r="1.7" fill="#96222a" stroke="#6e1218" stroke-width="0.5"/></svg>
<svg class="abs" style="left:79.2px;top:126px" width="24" height="24" viewBox="0 0 24 24"><circle cx="11.6" cy="12.4" r="10.6" fill="url(#sph)" stroke="#1f3f6e" stroke-width="1"/>
<path d="M11.6,12.4 L19.6,4.6" stroke="#96222a" stroke-width="1.7"/>
<circle cx="11.6" cy="12.4" r="1.9" fill="#96222a" stroke="#6e1218" stroke-width="0.5"/><circle cx="19.6" cy="4.6" r="1.9" fill="#96222a" stroke="#6e1218" stroke-width="0.5"/></svg>
<svg class="abs" style="left:111.1px;top:126px" width="24" height="24" viewBox="0 0 24 24"><path d="M12,1.6 L2.6,17.6 C2.6,23 21.4,23 21.4,17.6 Z" fill="url(#blh)" stroke="#1f3f6e" stroke-width="1" stroke-linejoin="round"/>
<path d="M12,2 V18.6 M3.6,18.4 H12" stroke="#96222a" stroke-width="1.6"/>
<circle cx="12" cy="2.2" r="1.7" fill="#96222a" stroke="#6e1218" stroke-width="0.5"/><circle cx="12" cy="18.6" r="1.7" fill="#96222a" stroke="#6e1218" stroke-width="0.5"/><circle cx="3.8" cy="18.4" r="1.7" fill="#96222a" stroke="#6e1218" stroke-width="0.5"/></svg>
<svg class="abs" style="left:143px;top:126px" width="24" height="24" viewBox="0 0 24 24"><ellipse cx="12" cy="13.4" rx="11" ry="8.6" fill="url(#sph)" stroke="#1f3f6e" stroke-width="1"/>
<ellipse cx="12" cy="11.8" rx="4.6" ry="2.8" fill="#eef2f8" stroke="#1f3f6e" stroke-width="0.9"/>
<path d="M12,3 V13.5 L3,19.4 M12,13.5 L21,17.6" fill="none" stroke="#96222a" stroke-width="1.5"/>
<circle cx="12" cy="3.2" r="1.7" fill="#96222a" stroke="#6e1218" stroke-width="0.5"/><circle cx="12" cy="13.5" r="1.7" fill="#96222a" stroke="#6e1218" stroke-width="0.5"/><circle cx="3.2" cy="19.2" r="1.7" fill="#96222a" stroke="#6e1218" stroke-width="0.5"/><circle cx="20.8" cy="17.5" r="1.7" fill="#96222a" stroke="#6e1218" stroke-width="0.5"/><circle cx="7" cy="16.6" r="1.3" fill="#96222a" stroke="#6e1218" stroke-width="0.5"/></svg>
<svg class="abs" style="left:174.7px;top:126px" width="24" height="24" viewBox="0 0 24 24"><path d="M2,4.6 V18.8 C2,23.4 20.4,23.4 20.4,18.8 V4.6 Z" fill="url(#blh)" stroke="#1f3f6e" stroke-width="1"/>
<ellipse cx="11.2" cy="4.6" rx="9.2" ry="3.2" fill="#86b0dc" stroke="#1f3f6e" stroke-width="1"/>
<ellipse cx="11.2" cy="4.6" rx="9" ry="3" fill="none" stroke="#96222a" stroke-width="1.5"/>
<path d="M22,3.8 V20.4" stroke="#96222a" stroke-width="1.6"/>
<circle cx="2.6" cy="3.6" r="1.7" fill="#96222a" stroke="#6e1218" stroke-width="0.5"/><circle cx="7" cy="2.4" r="1.4" fill="#96222a" stroke="#6e1218" stroke-width="0.5"/><circle cx="12" cy="2" r="1.4" fill="#96222a" stroke="#6e1218" stroke-width="0.5"/><circle cx="17" cy="2.8" r="1.4" fill="#96222a" stroke="#6e1218" stroke-width="0.5"/><circle cx="22" cy="3.8" r="1.7" fill="#96222a" stroke="#6e1218" stroke-width="0.5"/><circle cx="22" cy="20.4" r="1.7" fill="#96222a" stroke="#6e1218" stroke-width="0.5"/></svg>
<svg class="abs" style="left:207px;top:126px" width="24" height="24" viewBox="0 0 24 24"><path d="M5.2,1 L1.4,11.6 H9 Z" fill="#3f6fae" stroke="#1f3f6e" stroke-width="0.9" stroke-linejoin="round"/>
<path d="M10,5.4 H22.6" stroke="#6e7f92" stroke-width="1.8"/>
<path d="M8,11.4 L15,8.6 L22.6,11 V14 H8 Z" fill="#4473b0" stroke="#1f3f6e" stroke-width="0.8"/>
<ellipse cx="12" cy="18" rx="10.6" ry="5.4" fill="#6f8cae" stroke="#3a4f68" stroke-width="1"/>
<path d="M5.2,15.6 c1.8,-1.4 4,-1.4 4.6,0.4 v4.4 c-1.4,1.4 -3.4,1.4 -4.6,0 z M13.2,15.6 c1.8,-1.4 4,-1.4 4.6,0.4 v4.4 c-1.4,1.4 -3.4,1.4 -4.6,0 z" fill="#c9d4e2" stroke="#3a4f68" stroke-width="0.9"/></svg>
<svg class="abs" style="left:239.2px;top:126px" width="24" height="24" viewBox="0 0 24 24"><path d="M1.6,14.2 L7.4,12 L13,14 V21.4 L7,23.4 L1.6,21.4 Z" fill="url(#bl)" stroke="#1f3f6e" stroke-width="0.9" stroke-linejoin="round"/>
<path d="M1.6,14.2 L7,16 L13,14 M7,16 V23.4" fill="none" stroke="#1f3f6e" stroke-width="0.8"/>
<path d="M2.2,6.4 L5,3.6 L7.8,6.4 L5,9.2 Z" fill="#e8ecef" stroke="#6e7f92" stroke-width="1.1"/>
<path d="M7.6,3.8 L10.6,1.6 L12.6,4.6 L9.6,6.6 Z" fill="#96222a" stroke="#6e1218" stroke-width="0.6"/>
<path d="M13.8,1.6 H23.4" stroke="#6e7f92" stroke-width="1.7"/>
<path d="M18.6,2.6 V6.4 M16.4,4.6 L18.6,7.4 L20.8,4.6" fill="none" stroke="#96222a" stroke-width="1.6"/>
<rect x="15.6" y="8.8" width="6" height="6" fill="#f2f4f5" stroke="#8b9399" stroke-width="1.3"/>
<path d="M15.4,17.4 L18.2,15.8 L20.4,18.2 L17.4,20 Z" fill="#96222a" stroke="#6e1218" stroke-width="0.6"/></svg>
<svg class="abs" style="left:275px;top:128px" width="6" height="25" viewBox="0 0 6 25"><rect x="0" y="0" width="1" height="1" fill="#d0d0d0"/><rect x="1" y="1" width="1" height="1" fill="#fbfbfb"/><rect x="3" y="1.5" width="1" height="1" fill="#d0d0d0"/><rect x="4" y="2.5" width="1" height="1" fill="#ffffff"/><rect x="0" y="3" width="1" height="1" fill="#d0d0d0"/><rect x="1" y="4" width="1" height="1" fill="#fbfbfb"/><rect x="3" y="4.5" width="1" height="1" fill="#d0d0d0"/><rect x="4" y="5.5" width="1" height="1" fill="#ffffff"/><rect x="0" y="6" width="1" height="1" fill="#d0d0d0"/><rect x="1" y="7" width="1" height="1" fill="#fbfbfb"/><rect x="3" y="7.5" width="1" height="1" fill="#d0d0d0"/><rect x="4" y="8.5" width="1" height="1" fill="#ffffff"/><rect x="0" y="9" width="1" height="1" fill="#d0d0d0"/><rect x="1" y="10" width="1" height="1" fill="#fbfbfb"/><rect x="3" y="10.5" width="1" height="1" fill="#d0d0d0"/><rect x="4" y="11.5" width="1" height="1" fill="#ffffff"/><rect x="0" y="12" width="1" height="1" fill="#d0d0d0"/><rect x="1" y="13" width="1" height="1" fill="#fbfbfb"/><rect x="3" y="13.5" width="1" height="1" fill="#d0d0d0"/><rect x="4" y="14.5" width="1" height="1" fill="#ffffff"/><rect x="0" y="15" width="1" height="1" fill="#d0d0d0"/><rect x="1" y="16" width="1" height="1" fill="#fbfbfb"/><rect x="3" y="16.5" width="1" height="1" fill="#d0d0d0"/><rect x="4" y="17.5" width="1" height="1" fill="#ffffff"/><rect x="0" y="18" width="1" height="1" fill="#d0d0d0"/><rect x="1" y="19" width="1" height="1" fill="#fbfbfb"/><rect x="3" y="19.5" width="1" height="1" fill="#d0d0d0"/><rect x="4" y="20.5" width="1" height="1" fill="#ffffff"/><rect x="0" y="21" width="1" height="1" fill="#d0d0d0"/><rect x="1" y="22" width="1" height="1" fill="#fbfbfb"/><rect x="3" y="22.5" width="1" height="1" fill="#d0d0d0"/><rect x="4" y="23.5" width="1" height="1" fill="#ffffff"/></svg>
<svg class="abs" style="left:286.15px;top:126px" width="24" height="24" viewBox="0 0 24 24"><path d="M2.2,1.2 H21.8 V18.8 L18,22.8 H2.2 Z" fill="#fbfbfb" stroke="#8d8f8b" stroke-width="1"/>
<path d="M21.8,18.8 H18 V22.8" fill="#dcdcdc" stroke="#6d6f6b" stroke-width="0.9"/>
<circle cx="14.4" cy="8" r="5" fill="#fdf3f3" stroke="#b3161c" stroke-width="1.4"/>
<rect x="4.4" y="10" width="8.4" height="8.8" fill="#fbeaea" fill-opacity="0.85" stroke="#b3161c" stroke-width="1.4"/></svg>
<svg class="abs" style="left:317.85px;top:126px" width="24" height="24" viewBox="0 0 24 24"><path d="M1.6,16.2 L7,12.6 H17.4 L22.4,16.2 V21.4 L12,23.4 L1.6,21.4 Z" fill="url(#bl)" stroke="#1f3f6e" stroke-width="1" stroke-linejoin="round"/>
<path d="M1.6,16.2 L12,18.4 L22.4,16.2 M12,18.4 V23.4" fill="none" stroke="#1f3f6e" stroke-width="0.8"/>
<path d="M12,1 L18.6,7.6 H15 V15.4 H9 V7.6 H5.4 Z" fill="url(#blv)" stroke="#1f3f6e" stroke-width="1" stroke-linejoin="round"/></svg>
<svg class="abs" style="left:350.1px;top:126px" width="24" height="24" viewBox="0 0 24 24"><path d="M12,12 L12,1.4 A10.6,10.6 0 1 0 19.4,19.6 Z" fill="url(#bl)" stroke="#1f3f6e" stroke-width="1" stroke-linejoin="round"/>
<path d="M12,12 L2.2,16 M12,12 L15,22" stroke="#1f3f6e" stroke-width="0.8"/>
<circle cx="12" cy="12" r="3.6" fill="#f2f4f8" stroke="#1f3f6e" stroke-width="0.9"/>
<circle cx="12" cy="12" r="1.3" fill="#35608f"/>
<path d="M16,3.4 C20,4.6 22.4,8.6 21.6,13.4" fill="none" stroke="#3f6fae" stroke-width="2.2"/>
<path d="M18.8,12 L21.8,17 L24,11.4 Z" fill="#3f6fae" stroke="#1f3f6e" stroke-width="0.5"/>
<path d="M13,1.6 L17.8,1 L16.4,5.4 Z" fill="#3f6fae"/></svg>
<svg class="abs" style="left:381.7px;top:126px" width="24" height="24" viewBox="0 0 24 24"><path d="M1.4,8.4 L8.4,3.2 V19.6 L1.4,22 Z" fill="#2e5b97" stroke="#1f3f6e" stroke-width="0.9" stroke-linejoin="round"/>
<path d="M15.6,3.2 L23.2,8.4 V22 L15.6,19.6 Z" fill="#5f8cc4" stroke="#1f3f6e" stroke-width="0.9" stroke-linejoin="round"/>
<path d="M12,1 V24" stroke="#8f1016" stroke-width="2.3" stroke-dasharray="3.3 2.6"/></svg>
<svg class="abs" style="left:414px;top:126px" width="24" height="24" viewBox="0 0 24 24"><rect x="2" y="1.8" width="20.4" height="20.8" fill="#f4f6fa" stroke="#2b4f86" stroke-width="2.2" stroke-dasharray="3 1.6"/>
<rect x="2.6" y="12.4" width="9.4" height="9.6" fill="#e8edf5" stroke="#1d3557" stroke-width="2.2"/>
<path d="M11.4,12.8 L17,7.2" stroke="#2b4f86" stroke-width="2.4"/>
<path d="M13.2,5.6 H18.8 V11.2 Z" fill="#2b4f86"/></svg>
<svg class="abs" style="left:446.25px;top:126px" width="24" height="24" viewBox="0 0 24 24"><path d="M8.4,3.4 C12,1.6 18,2 23,5.4 C18,5.6 15,8 13.4,12 V21.6 L2,18 V11 C2.6,7.6 5,5 8.4,3.4 Z" fill="url(#bl)" stroke="#1f3f6e" stroke-width="0.9" stroke-linejoin="round"/>
<path d="M2,15 L13.4,18.4 M2.2,11 C6,11 10,11.6 13.4,12" fill="none" stroke="#2a5490" stroke-width="0.8"/></svg>
<svg class="abs" style="left:477.9px;top:126px" width="24" height="24" viewBox="0 0 24 24"><path d="M10.4,2.6 C14,1.6 19.6,2.4 23.4,4.8 C19,5.2 16.6,7 15.4,9.6 L12.2,16.4 V22 L1.6,18.6 V13.6 Z" fill="url(#bl)" stroke="#1f3f6e" stroke-width="0.9" stroke-linejoin="round"/>
<path d="M1.6,13.6 L12.2,16.4 M4.4,10 L15.4,9.6 M1.8,16.4 L12.2,19.4" fill="none" stroke="#2a5490" stroke-width="0.8"/></svg>
<svg class="abs" style="left:510.15px;top:126px" width="24" height="24" viewBox="0 0 24 24"><rect x="1.8" y="1.8" width="14.4" height="14.2" fill="#f2f2f2" stroke="#9a9c98" stroke-width="1.8"/>
<rect x="8.2" y="8.2" width="14.6" height="14.4" fill="url(#gr)" stroke="#9a9c98" stroke-width="1"/></svg>
<svg class="abs" style="left:541.75px;top:126px" width="24" height="24" viewBox="0 0 24 24"><path d="M2.4,7 L22,2.4 V17.4 L2.4,22 Z" fill="url(#bl)" stroke="#1f3f6e" stroke-width="0.8"/>
<path d="M2.4,6.4 V22.8 M22,1.4 V18" stroke="#8c1a22" stroke-width="2.4" stroke-linecap="round"/></svg>
<svg class="abs" style="left:574px;top:126px" width="24" height="24" viewBox="0 0 24 24"><path d="M2.4,10 L9,3.6 L21.6,6 V20.4 L9,19.4 L2.4,17.6 Z" fill="url(#bl)" stroke="#1f3f6e" stroke-width="0.6" stroke-linejoin="round"/>
<path d="M2.4,10 H9 V17.8 H2.4 Z" fill="#a3141a" stroke="#6e1218" stroke-width="0.9"/>
<path d="M9,3.6 L21.6,6 V20.4" fill="none" stroke="#a3141a" stroke-width="1.9" stroke-linejoin="round"/>
<path d="M9,10 L21,6.4 M9,17.8 L21.4,20" stroke="#a3141a" stroke-width="1.2"/>
<path d="M9.6,4.6 L20.6,6.8 L9.6,10 Z" fill="#8fb5e0"/></svg>
<svg class="abs" style="left:606px;top:126px" width="24" height="24" viewBox="0 0 24 24"><path d="M8.6,2.4 L17.6,4.6 L22.6,14.6 L12.4,22.6 L2.2,19.6 L2.6,12.6 Z" fill="url(#bl)" stroke="#96222a" stroke-width="1.6" stroke-linejoin="round"/>
<path d="M2.4,12.6 H9.6 V20.4 H2.4 Z" fill="#a3141a" stroke="#6e1218" stroke-width="0.8"/>
<path d="M9.4,4 L16.4,5.8 L12.4,12.6 L9.6,12.6 Z" fill="#8fb5e0"/>
<circle cx="21.6" cy="3" r="1.7" fill="#7a0d12"/>
<circle cx="4.6" cy="16.4" r="0.9" fill="#5d0a0e"/><circle cx="7.4" cy="16.4" r="0.9" fill="#5d0a0e"/></svg>
<svg class="abs" style="left:638px;top:126px" width="24" height="24" viewBox="0 0 24 24"><path d="M2.2,2.4 L16.8,4 V22.4 L2.2,20 Z" fill="url(#gr)" stroke="#9a9c98" stroke-width="1"/>
<path d="M16.8,4 L21.8,6.4 V18.6 L16.8,22.4" fill="#b4b6b2" stroke="#9a9c98" stroke-width="0.9"/>
<path d="M5,6 L14,7 V18.6 L5,17.2 Z" fill="#a7a9a5" stroke="#8f918d" stroke-width="0.7"/>
<path d="M9.6,15.6 l2.4,-2.6 l2,3.2 z" fill="#c9cbc7"/></svg>
<svg class="abs" style="left:669.8px;top:126px" width="24" height="24" viewBox="0 0 24 24"><path d="M7,2.8 L14,1.2 L19,2.8 V22 L12.4,23.4 L7,21.8 Z" fill="url(#gr)" stroke="#8f918d" stroke-width="0.9"/>
<path d="M7,2.8 L12.4,4.4 L19,2.8 M12.4,4.4 V23.4" fill="none" stroke="#8f918d" stroke-width="0.7"/>
<path d="M1,9 L7,6.8 H19 L23.4,8.6 L18,10.6 H6 Z M1,16.6 L7,14.4 H19 L23.4,16.2 L18,18.2 H6 Z" fill="#a9aba7" stroke="#8a8c88" stroke-width="0.6"/>
<path d="M7.4,11.4 H18.6 M7.4,19.2 H18.6" stroke="#8a8c88" stroke-width="0.7"/></svg>
<svg class="abs" style="left:702px;top:126px" width="24" height="24" viewBox="0 0 24 24"><path d="M12,1 L18.4,7.6 H15 V12 H9 V7.6 H5.6 Z" fill="#b3b5b1" stroke="#8f918d" stroke-width="0.9" stroke-linejoin="round"/>
<path d="M1.8,12.8 L9.6,10.2 L22.4,12 L14.4,15 Z" fill="#c9cbc7" stroke="#8f918d" stroke-width="0.9"/>
<path d="M1.8,20.6 L9.6,18 L22.4,19.8 L14.4,22.8 Z" fill="#a9aba7" stroke="#8f918d" stroke-width="0.9"/></svg>
<svg class="abs" style="left:729.8px;top:135.4px" width="8" height="5" viewBox="0 0 8 5"><path d="M0,0 h8 l-4,4.5 z" fill="#7a7a7a"/></svg>
<svg class="abs" style="left:747.15px;top:126px" width="24" height="24" viewBox="0 0 24 24"><path d="M5.4,2.6 L16,1 L23,4 V17.6 L14,22.4 L1.4,19.6 Z" fill="url(#gr)" stroke="#7f817d" stroke-width="1" stroke-linejoin="round"/>
<path d="M7.6,4.6 L16,3.4 L21.2,5.6 V15.4 L13.6,16.6 L7.6,15.4 Z" fill="#d2d4d0" stroke="#8a8c88" stroke-width="0.8"/>
<path d="M13.6,16.6 V6.4 L7.6,4.6 M13.6,6.4 L21.2,5.6" fill="none" stroke="#8a8c88" stroke-width="0.8"/></svg>
<svg class="abs" style="left:779px;top:126px" width="24" height="24" viewBox="0 0 24 24"><path d="M1.8,4.4 L6,1.2 H22.4 V18.4 L18.6,21.6 H1.8 Z" fill="#2c5a98" stroke="#16304f" stroke-width="1" stroke-linejoin="round"/>
<path d="M3.6,6 H18 V20 H3.6 Z" fill="#4a86b8" stroke="#16304f" stroke-width="0.7"/>
<path d="M1.8,4.4 H18.6 V21.6 M18.6,4.4 L22.4,1.2" fill="none" stroke="#16304f" stroke-width="0.8"/>
<path d="M4.2,7.4 H15.6 V11 H8.4 V13.4 H13.4 V16.6 H8.4 V21.4 L6.4,23.4 L4.2,21.4 Z" fill="#6cc11c" stroke="#376f06" stroke-width="1" stroke-linejoin="round"/>
<path d="M15.6,7.4 L17,8.6 V12 L15.6,11 M13.4,13.4 L14.6,14.4 V17.4 L13.4,16.6" fill="#4e9a06" stroke="#376f06" stroke-width="0.6"/></svg>
<svg class="abs" style="left:811.1px;top:126px" width="24" height="24" viewBox="0 0 24 24"><path d="M1.6,6 L13,2 L23.2,5 V17.6 L12.6,22 L1.6,18.4 Z" fill="url(#gr)" stroke="#9a9c98" stroke-width="0.9" stroke-linejoin="round"/>
<path d="M1.6,6 L12.6,9.2 L23.2,5 Z" fill="#d4d6d2" stroke="#9a9c98" stroke-width="0.7"/>
<path d="M12.6,9.2 V22" stroke="#9a9c98" stroke-width="0.7"/>
<path d="M12.8,9.6 L23,5.4 V17.4 L12.8,21.6 Z" fill="#cfd1cd"/></svg>
<svg class="abs" style="left:848px;top:128px" width="6" height="25" viewBox="0 0 6 25"><rect x="0" y="0" width="1" height="1" fill="#d0d0d0"/><rect x="1" y="1" width="1" height="1" fill="#fbfbfb"/><rect x="3" y="1.5" width="1" height="1" fill="#d0d0d0"/><rect x="4" y="2.5" width="1" height="1" fill="#ffffff"/><rect x="0" y="3" width="1" height="1" fill="#d0d0d0"/><rect x="1" y="4" width="1" height="1" fill="#fbfbfb"/><rect x="3" y="4.5" width="1" height="1" fill="#d0d0d0"/><rect x="4" y="5.5" width="1" height="1" fill="#ffffff"/><rect x="0" y="6" width="1" height="1" fill="#d0d0d0"/><rect x="1" y="7" width="1" height="1" fill="#fbfbfb"/><rect x="3" y="7.5" width="1" height="1" fill="#d0d0d0"/><rect x="4" y="8.5" width="1" height="1" fill="#ffffff"/><rect x="0" y="9" width="1" height="1" fill="#d0d0d0"/><rect x="1" y="10" width="1" height="1" fill="#fbfbfb"/><rect x="3" y="10.5" width="1" height="1" fill="#d0d0d0"/><rect x="4" y="11.5" width="1" height="1" fill="#ffffff"/><rect x="0" y="12" width="1" height="1" fill="#d0d0d0"/><rect x="1" y="13" width="1" height="1" fill="#fbfbfb"/><rect x="3" y="13.5" width="1" height="1" fill="#d0d0d0"/><rect x="4" y="14.5" width="1" height="1" fill="#ffffff"/><rect x="0" y="15" width="1" height="1" fill="#d0d0d0"/><rect x="1" y="16" width="1" height="1" fill="#fbfbfb"/><rect x="3" y="16.5" width="1" height="1" fill="#d0d0d0"/><rect x="4" y="17.5" width="1" height="1" fill="#ffffff"/><rect x="0" y="18" width="1" height="1" fill="#d0d0d0"/><rect x="1" y="19" width="1" height="1" fill="#fbfbfb"/><rect x="3" y="19.5" width="1" height="1" fill="#d0d0d0"/><rect x="4" y="20.5" width="1" height="1" fill="#ffffff"/><rect x="0" y="21" width="1" height="1" fill="#d0d0d0"/><rect x="1" y="22" width="1" height="1" fill="#fbfbfb"/><rect x="3" y="22.5" width="1" height="1" fill="#d0d0d0"/><rect x="4" y="23.5" width="1" height="1" fill="#ffffff"/></svg>
<svg class="abs" style="left:858px;top:126px" width="24" height="24" viewBox="0 0 24 24"><path d="M2.6,7.4 L11.6,4.2 L21.6,7 V17.8 L12.4,21 L2.6,17.8 Z" fill="url(#bl)" stroke="#1f3f6e" stroke-width="1" stroke-linejoin="round"/>
<path d="M2.6,7.4 L12.4,10 L21.6,7 Z" fill="#7aa6d6" stroke="#1f3f6e" stroke-width="0.7"/>
<path d="M12.4,10 V21" stroke="#1f3f6e" stroke-width="0.7"/>
<path d="M5,2.6 H1.2 V7 M1.2,17.6 V22 H5 M19,2.6 H22.8 V7 M22.8,17.6 V22 H19" fill="none" stroke="#1c2733" stroke-width="1.2"/></svg>
<svg class="abs" style="left:886.4px;top:135.6px" width="8" height="5" viewBox="0 0 8 5"><path d="M0,0 h8 l-4,4.5 z" fill="#7a7a7a"/></svg>
<svg class="abs" style="left:902.6px;top:126px" width="24" height="24" viewBox="0 0 24 24"><circle cx="15.2" cy="8.6" r="7.4" fill="url(#sph)" stroke="#1f3f6e" stroke-width="0.9"/>
<circle cx="8.6" cy="15" r="7.6" fill="url(#sph)" stroke="#1f3f6e" stroke-width="0.9"/></svg>
<svg class="abs" style="left:934.6px;top:126px" width="24" height="24" viewBox="0 0 24 24"><circle cx="8.6" cy="15" r="7.6" fill="url(#sphg)" stroke="#9a9c98" stroke-width="0.8"/>
<circle cx="15.4" cy="8.6" r="7.2" fill="#f6f6f6" stroke="#a5a7a3" stroke-width="1"/></svg>
<svg class="abs" style="left:966.9px;top:126px" width="24" height="24" viewBox="0 0 24 24"><circle cx="15.2" cy="8.8" r="7.4" fill="url(#sphg)" stroke="#9a9c98" stroke-width="0.8"/>
<circle cx="8.8" cy="15" r="7.6" fill="url(#sphg)" stroke="#9a9c98" stroke-width="0.8"/>
<circle cx="15.2" cy="8.8" r="6.9" fill="#b3b5b1" opacity="0.55"/></svg>
<svg class="abs" style="left:998.6px;top:126px" width="24" height="24" viewBox="0 0 24 24"><circle cx="15.2" cy="8.6" r="7.2" fill="#f4f4f4" stroke="#a5a7a3" stroke-width="1"/>
<circle cx="8.8" cy="15" r="7.4" fill="#f4f4f4" stroke="#a5a7a3" stroke-width="1"/>
<path d="M8.2,9 A7.4,7.4 0 0 1 15.8,15.8 A7.2,7.2 0 0 1 8.2,9 Z" fill="#9a9c98" stroke="#8a8c88" stroke-width="0.6"/>
<circle cx="8.8" cy="15" r="7.4" fill="none" stroke="#a5a7a3" stroke-width="1"/></svg>
<svg class="abs" style="left:1031.1px;top:126px" width="24" height="24" viewBox="0 0 24 24"><path d="M1.4,1.4 H8.6 V8 H22.8 V16 H8.6 V22.8 H1.4 Z" fill="url(#blh)" stroke="#b01a26" stroke-width="1.7" stroke-linejoin="miter"/>
<path d="M3,3 H7 V21 H3 Z" fill="#5f8cc4" opacity="0.55"/></svg>
<svg class="abs" style="left:1059.3px;top:135.6px" width="8" height="5" viewBox="0 0 8 5"><path d="M0,0 h8 l-4,4.5 z" fill="#7a7a7a"/></svg>
<svg class="abs" style="left:1075.9px;top:126px" width="24" height="24" viewBox="0 0 24 24"><circle cx="15.6" cy="8.4" r="7.2" fill="#4a7cbd" stroke="#1f3f6e" stroke-width="0.9"/>
<circle cx="8.4" cy="15.6" r="7.2" fill="#4a7cbd" stroke="#1f3f6e" stroke-width="0.9"/>
<circle cx="12" cy="12" r="4.2" fill="none" stroke="#f2f6fb" stroke-width="1.2"/></svg>
<svg class="abs" style="left:1104px;top:135.6px" width="8" height="5" viewBox="0 0 8 5"><path d="M0,0 h8 l-4,4.5 z" fill="#7a7a7a"/></svg>
<svg class="abs" style="left:1121.6px;top:126px" width="24" height="24" viewBox="0 0 24 24"><path d="M10.4,8 L3.4,20 C3.4,24 20.6,24 20.6,20 L14.4,8 Z" fill="url(#gr)" stroke="#a1a39f" stroke-width="0.9"/>
<path d="M6,16 C9,17.6 15,17.6 18.4,16 M4.6,19 C8,21 16,21 19.6,19" fill="none" stroke="#a8aaa6" stroke-width="0.8"/>
<circle cx="12.4" cy="6" r="4.6" fill="#eeeeee" stroke="#a1a39f" stroke-width="1.3"/>
<path d="M15.4,9.6 L19,13.6" stroke="#a1a39f" stroke-width="2"/></svg>
<svg class="abs" style="left:1152.5px;top:126px" width="24" height="24" viewBox="0 0 24 24"><path d="M1.6,6 L8,1.8 H22.6 V17.6 L16.4,22.4 H1.6 Z" fill="url(#gr)" stroke="#8f918d" stroke-width="1" stroke-linejoin="round"/>
<path d="M1.6,6 H16.4 L22.6,1.8 M16.4,6 V22.4" fill="none" stroke="#8f918d" stroke-width="0.8"/>
<path d="M4.6,14.4 C5,10.6 8,9 11,9.6 V7.6 L15,11 L11,14.2 V12.4 C8.6,12 6.4,12.6 4.6,14.4 Z M14.4,14 C14.4,17 12,18.6 9.4,18.2 V20 L5.6,17 L9.4,14.2 V15.8 C11.4,16 13,15.6 14.4,14 Z" fill="#d9dbd7" stroke="#8a8c88" stroke-width="0.6"/></svg>
<span class="abs" style="left:23.7px;top:3.44px;font-size:12px;line-height:1;font-weight:400;color:#000;letter-spacing:-0.238px;white-space:nowrap">* Безымянный - FreeCAD 1.0.0</span>
<span class="abs" style="left:10.4px;top:25.84px;font-size:12px;line-height:1;font-weight:400;color:#000;letter-spacing:-0.479px;white-space:nowrap">Файл</span>
<span class="abs" style="left:53px;top:25.84px;font-size:12px;line-height:1;font-weight:400;color:#000;letter-spacing:-0.158px;white-space:nowrap"><u>П</u>равка</span>
<span class="abs" style="left:107.3px;top:25.84px;font-size:12px;line-height:1;font-weight:400;color:#000;letter-spacing:-0.773px;white-space:nowrap">Вид</span>
<span class="abs" style="left:141px;top:25.84px;font-size:12px;line-height:1;font-weight:400;color:#000;letter-spacing:0.061px;white-space:nowrap"><u>И</u>нструменты</span>
<span class="abs" style="left:231.6px;top:25.84px;font-size:12px;line-height:1;font-weight:400;color:#000;letter-spacing:0.138px;white-space:nowrap">Макросы</span>
<span class="abs" style="left:297.8px;top:25.84px;font-size:12px;line-height:1;font-weight:400;color:#000;letter-spacing:-0.554px;white-space:nowrap">Part</span>
<span class="abs" style="left:332.3px;top:25.84px;font-size:12px;line-height:1;font-weight:400;color:#000;letter-spacing:-0.223px;white-space:nowrap">Окна</span>
<span class="abs" style="left:374.4px;top:25.84px;font-size:12px;line-height:1;font-weight:400;color:#000;letter-spacing:-0.283px;white-space:nowrap">Справка</span>
<span class="abs" style="left:269.4px;top:55.54px;font-size:12px;line-height:1;font-weight:400;color:#000;letter-spacing:-0.404px;white-space:nowrap">Part</span>
<span class="abs" style="left:46.7px;top:178.64px;font-size:12px;line-height:1;font-weight:700;color:#000;letter-spacing:-0.172px;white-space:nowrap">Безымянный</span>
<span class="abs" style="left:88.6px;top:196.64px;font-size:12px;line-height:1;font-weight:700;color:#06260a;letter-spacing:-0.526px;white-space:nowrap">Тело</span>
<span class="abs" style="left:108.3px;top:214.74px;font-size:12px;line-height:1;font-weight:400;color:#747474;letter-spacing:-0.013px;white-space:nowrap">Начало координат</span>
<span class="abs" style="left:88.4px;top:233.04px;font-size:12px;line-height:1;font-weight:400;color:#000;letter-spacing:-0.377px;white-space:nowrap">Tube</span>
<span class="abs" style="left:88.4px;top:250.84px;font-size:12px;line-height:1;font-weight:400;color:#000;letter-spacing:-0.577px;white-space:nowrap">Tube001</span>
<span class="abs" style="left:4.2px;top:541.69px;font-size:11px;line-height:1;font-weight:400;color:#5a5a5a;letter-spacing:-0.502px;white-space:nowrap">Вид</span>
<span class="abs" style="left:34.3px;top:543.29px;font-size:11px;line-height:1;font-weight:400;color:#000;letter-spacing:-0.092px;white-space:nowrap">Данные</span>
<span class="abs" style="left:30.4px;top:984.29px;font-size:11px;line-height:1;font-weight:400;color:#6a6a6a;letter-spacing:0.117px;white-space:nowrap">Запустить</span>
<span class="abs" style="left:149.7px;top:985.19px;font-size:11px;line-height:1;font-weight:400;color:#000;letter-spacing:-0.030px;white-space:nowrap">Безымянный : 1*</span>
<span class="abs" style="left:1.9px;top:1017.09px;font-size:11px;line-height:1;font-weight:400;color:#000;letter-spacing:-0.045px;white-space:nowrap">Valid, внутреннее название: Origin</span>
</body></html>
